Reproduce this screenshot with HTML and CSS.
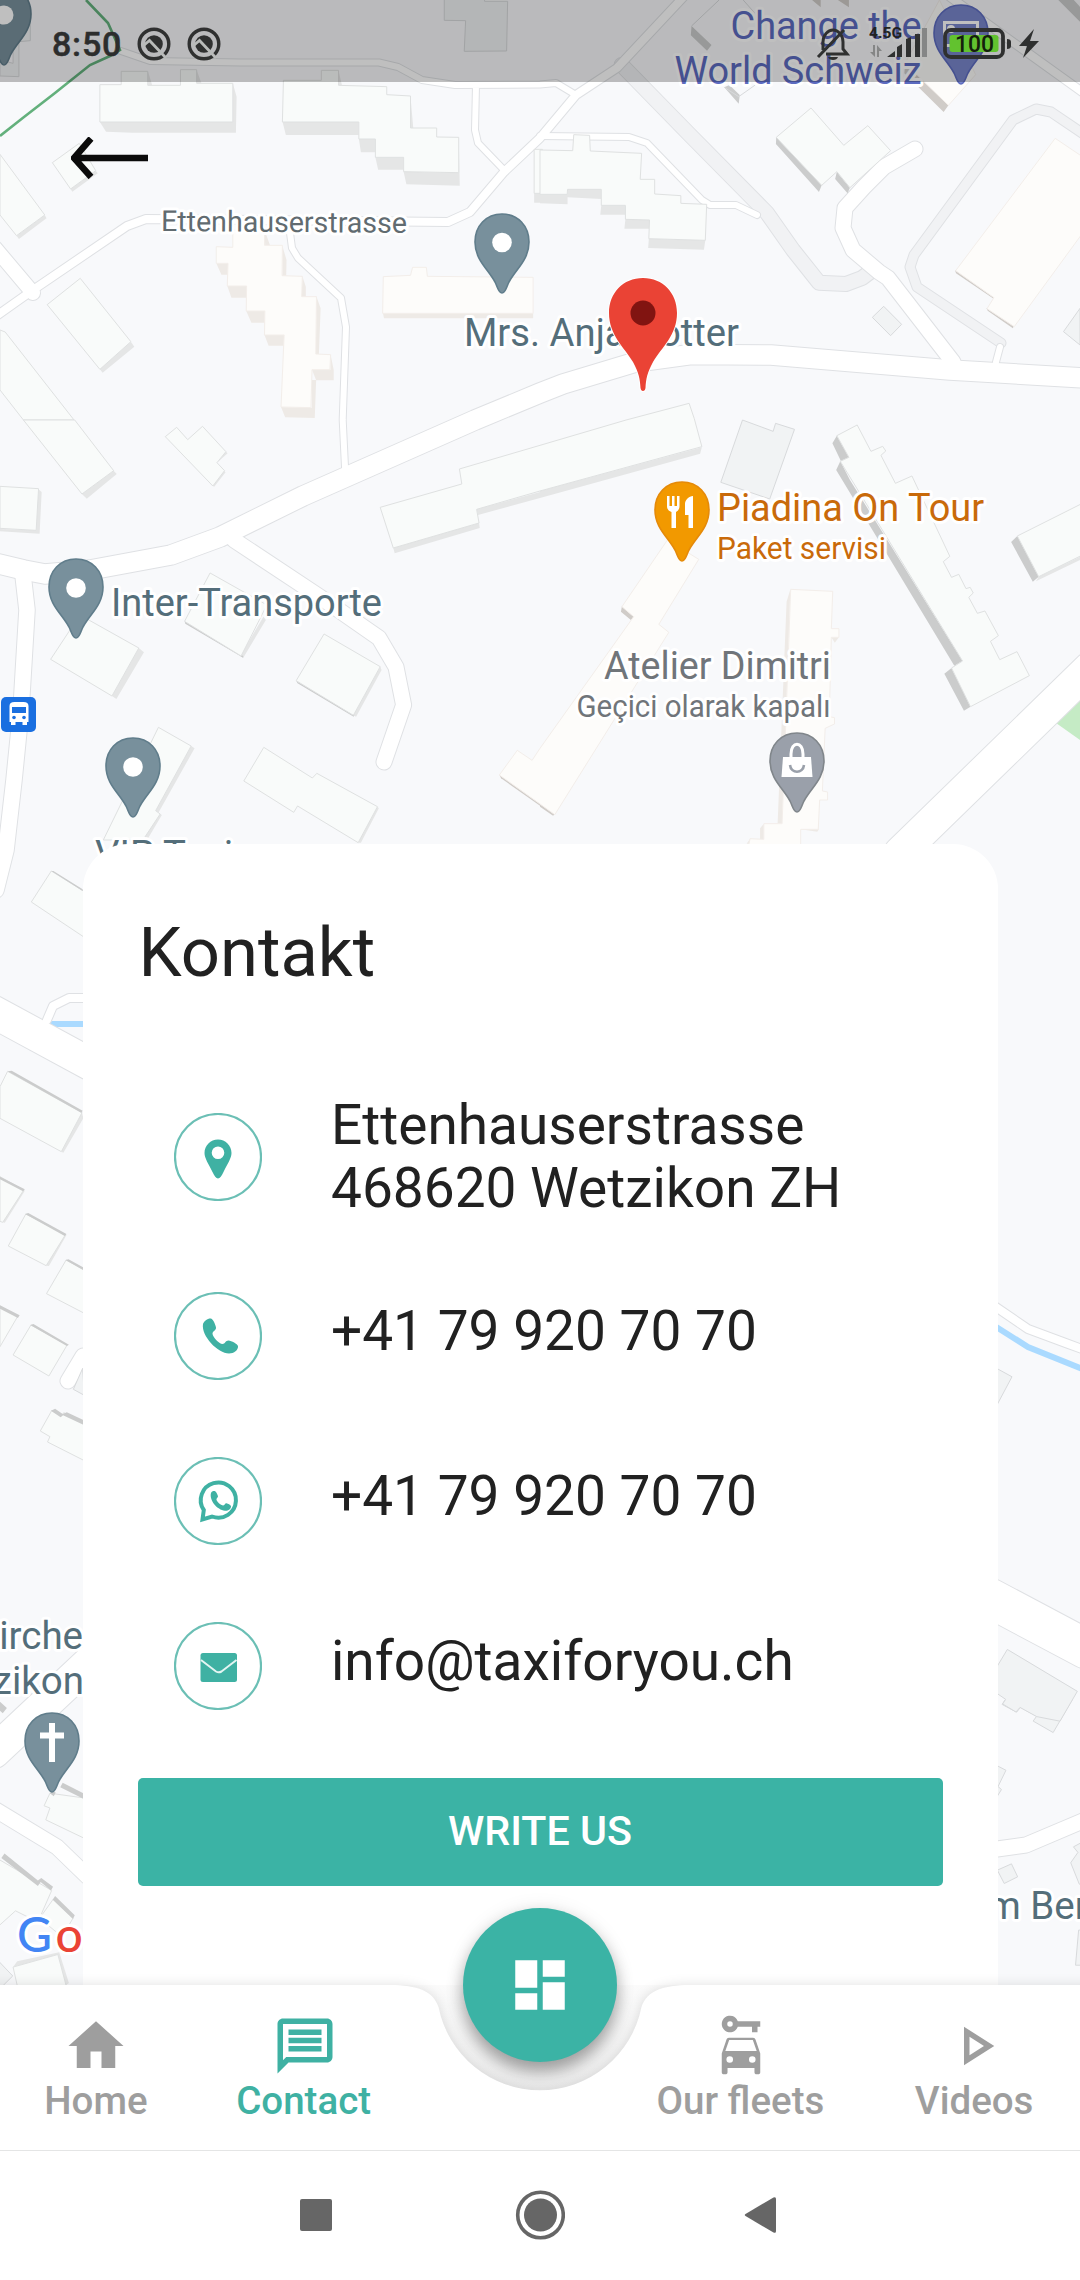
FILE: index.html
```html
<!DOCTYPE html>
<html lang="de">
<head>
<meta charset="utf-8">
<title>Kontakt</title>
<link rel="stylesheet" href="styles.css">
</head>
<body>
<div class="screen">

<svg class="map" viewBox="0 0 1080 2280" aria-label="Map">
  <defs>
    <path id="pin" d="M0-80C-16-80-27-68-27-52C-27-34-14-25-7-12C-4-6-3.500-1 0-1C3.500-1 4-6 7-12C14-25 27-34 27-52C27-68 16-80 0-80Z"/>
    <g id="streets">
      <path class="w21" d="M-5 563L24 570L45 574L90 570L171 555L220 537L303 496L475 420L540 393L563 384L636 362L691 354.500L771 355L950 370L1085 378"/>
      <path class="w8" d="M-5 317L33 290L127 226L146 219L448 222L470 212L504 172L540 138L576 95L617 68L690-10"/>
      <path class="w14" d="M-5 248L33 293"/>
      <path class="w6" d="M118 50L150 61L240 62.500L379 62.500L398 67L422 80L455 85L540 84.500L556 83L576 95M476 85L475 130L478 143L504 170M290 233L292 248L298 258L341 298L346 327L342.700 420L345 467M540 136L629 137L647 143L702 200L710 205L736 205L757 215M996 362L1000 347"/>
      <path class="w15" d="M915 149L884 167L864 187L845 208L843 228L853 250L879 272L888 278L953 362M234 540L320 597L379 638L396 667L403.600 705L384 762M-4 1810L57 1847L88 1877M83 1356L68 1381M990 1850L1026 1845L1085 1820"/>
      <path class="w16" d="M23 575L27 610L21 710L14 780L6 850L-4 890"/>
      <path class="w8" d="M950-3L1085 94M47 1020L53 1006L69 998L90 998M990 1303L1028 1329L1067 1343.500L1085 1350"/>
      <path class="w33" d="M1090 668L900 853M-6 1012L90 1064M-6 1752L90 1662"/>
      <path class="w40" d="M990 1598L1086 1649"/>
    </g>
    <g id="paths">
      <path class="w14" d="M621.600 65L688 133L767 213L793 250L819 282.700L846 284L862 278L870 272"/>
      <path class="w9" d="M1001 343L917 287L910 267L914 255L1013 120L1036 109L1051 112L1085 135"/>
    </g>
    <linearGradient id="notch" x1="0" y1="0" x2="0" y2="1">
      <stop offset="0" stop-color="#fbfbfb"/><stop offset="1" stop-color="#ececec"/>
    </linearGradient>
  </defs>

  <rect class="land" width="1080" height="2280"/>
  <path class="park" d="M1080 700L1056 723L1080 740Z"/>
  <path class="water" d="M50 1024H90M990 1323L1028 1347L1085 1370"/>
  <use href="#paths" class="casing"/><use href="#paths" class="track"/>
  <use href="#streets" class="casing"/><use href="#streets" class="street"/>

  <!-- buildings, one group per map tile -->
  <g transform="scale(.34439 .33333)">
    <path class="side" d="M290 366L308 395L385 398H685L687 290L676 250V366ZM820 364L830 405H1042V366ZM1042 417L1048 457H1090V417ZM1090 472L1098 509H1172V472ZM1172 515L1180 553L1335 557L1332 412V518ZM1192 290L1200 384H1192ZM430 215L442 256H430ZM571 210L585 250H571ZM983 212L993 256H983ZM205 567L210 575L284 520L278 512ZM48 707L55 717L135 655L130 645ZM290 1108L298 1118L390 1040L380 1025ZM1551 580V608H1568V580Z"/>
    <path class="house" d="M290 254H352V214H429V256H524V209H571V250H676V366H290ZM823 241H933V211H983V256L1123 260V284L1192 288V384H1268V411L1332 412V518L1172 515V472H1090V417H1042V366H820ZM152 488L230 430L278 512L205 567ZM0 463L130 645L48 707L0 645ZM137 914L233 835L380 1025L290 1108ZM0 990L15 996L215 1260L68 1260L0 1170ZM1551 580V448H1575V580Z"/>
    <path class="annex" d="M1290-5V61L1352 62L1348 154L1471 153L1474 4H1407V-5ZM0 180L38 190V65L88 60V122L55 125V230L0 228Z"/>
    <path class="side warm" d="M628 790L643 824H662V790ZM660 858L672 893H716V858ZM715 933L730 968H769V933ZM768 1005L780 1037H825V1005ZM816 1221L828 1252L914 1254L918 1140H906V1223ZM906 1109L918 1141H969V1110L960 1064V1109ZM919 890L931 925L926 1062H917ZM820 738L832 780L831 827H820ZM878 829L888 860V890H876ZM768 690L784 736H770ZM1112 940L1115 955H1548V940Z"/>
    <path class="house warm" d="M676 690H768V736H820L819 827L878 829L876 890H919L917 1062L960 1064L958 1109H906L903 1223L816 1221L825 1005H768L769 933H715L716 858H660L662 790H628V740L676 742ZM1113 830L1192 826L1198 802H1238L1241 829L1548 832V940H1111Z"/>
  </g>
  <g transform="translate(540 0) scale(.34439 .33333)">
    <path class="side" d="M0 583V610L80 613V583ZM80 566V592L178 597V568ZM178 616L175 644H248V616ZM248 658L245 686H318V660ZM316 716L314 744L476 749L480 721Z"/>
    <path class="side dark" d="M686 412L685 432L810 576L818 556ZM862 515L857 537L893 580L900 563ZM440 78L438 106L485 152L498 135ZM535 262L577 311L580 285L550 255Z"/>
    <path class="house" d="M0 450L95 452L98 404L144 406L146 453L295 460L291 538H333V582L409 587V610L484 613L480 721L316 716L318 660L248 658V616H178V568H80L79 583H0ZM686 412L787 324L882 436L952 377L1018 452L900 563L862 515L818 556Z"/>
    <path class="outline" d="M440 78L520 0M590 0L650 70M535 262L577 290L625 255"/>
    <path class="side dark warm" d="M1060 190L1058 220L1172 336L1186 316ZM1205 810L1208 820L1315 895L1318 888ZM1296 924L1300 932L1373 985L1377 976ZM790 0L815 22V0ZM865 0L897 22V0Z"/>
    <path class="house warm" d="M1060 190L1160 0L1265 224L1186 316ZM1496 415L1575 470V700L1377 980L1298 926L1318 893L1207 812Z"/>
    <path class="annex" d="M965 952L998 919L1050 973L1018 1007ZM1568 925L1520 995L1568 1035Z"/>
    <path class="side dark" d="M1505 0L1568 65V20L1550 0Z"/>
  </g>
  <g transform="translate(0 420) scale(.34439 .33333)">
    <path class="side" d="M238 222L252 236L339 162L330 152ZM108 205L121 216L115 341L0 334V327L105 331ZM1142 384L1146 400L1393 324L1391 309ZM1384 268L1388 285L1568 234V216ZM618 198L622 200L655 157L650 152ZM630 128L661 100L656 95ZM325 828L338 837L418 697L403 684ZM697 708L706 714L772 600L765 590ZM1026 886L1034 890L1108 750L1104 740ZM452 1172L460 1178L565 985L555 978ZM415 1250L430 1255L470 1185L460 1178ZM1040 1268L1048 1268L1100 1165L1096 1160Z"/>
    <path class="side dark" d="M536 604L538 611L706 713V708ZM860 782L864 790L1027 890L1029 884Z"/>
    <path class="house" d="M68 0H217L330 152L238 222ZM0 199L112 206L105 331L0 325ZM480 50L513 22L545 59L588 19L656 95L630 128L652 152L618 198ZM232 585L403 684L325 828L147 718ZM610 459L775 555L700 708L536 604ZM941 642L1104 740L1026 886L860 782ZM460 922L555 978L452 1172L465 1182L415 1260H300ZM766 982L907 1074L920 1060L1096 1160L1040 1268L864 1158L853 1177L708 1083Z"/>
    <path class="side dark warm" d="M1450 1065L1455 1075L1568 1157V1147Z"/>
  </g>
  <g transform="translate(540 420) scale(.34439 .33333)">
    <path class="side" d="M0 213V234L465 101L470 82ZM1448 470L1440 484L1568 420V410Z"/>
    <path class="side dark" d="M862 47L849 70L874 124L897 112ZM872 124L860 150L1203 737L1227 723L900 180ZM1195 744L1174 761L1231 872L1250 860ZM1386 348L1368 366L1431 485L1448 470Z"/>
    <path class="house" d="M0 76L250 0L433-50L448-4L470 80L0 213L-184 268L-177 309L-426 384L-464 262L-227 192L-234 147ZM862 47L921 15L961 94L995 79L1004 93L990 106L1032 190L1080 168L1190 409L1171 425L1195 472L1216 463L1237 506L1249 502L1258 519L1245 532L1270 580L1292 573L1331 647L1308 664L1335 719L1385 695L1421 767L1250 860L1195 744L1227 723L872 124L897 112ZM1386 348L1575 250V405L1448 470Z"/>
    <path class="annex" d="M588 0L677 34L684 10L739 28L667 237L525 187Z"/>
    <path class="side warm" d="M727 508L716 545L690 1210H703ZM846 652L856 668L868 652ZM650 1211L639 1225V1258H650ZM610 1256L600 1271H615ZM757 1228L805 1235L810 1228Z"/>
    <path class="side dark warm" d="M238 558L235 575L264 600L272 590ZM0 1152V1160L38 1187L43 1182Z"/>
    <path class="house warm" d="M370 360L461 418L345 613L374 637L43 1184L0 1152L-118 1065L-66 991L-23 1021L0 985L272 590L238 560ZM728 508L850 514L846 626H868V652H846L840 890L855 893V912L828 925L820 1113L835 1116V1140H812L808 1228H757V1280H605L610 1256L650 1258V1211H703Z"/>
  </g>
  <g transform="translate(0 840) scale(.34439 .33333)">
    <path class="side" d="M178 935L184 938L242 835L238 818ZM8 1147L14 1148L72 1052L66 1048ZM134 1277L142 1278L193 1185L185 1180Z"/>
    <path class="house" d="M149 93L245 155V292L91 186ZM22 694L238 818L178 935L0 835V740ZM0 1010L69 1050L8 1147L0 1144ZM75 1122L190 1184L134 1277L24 1218ZM192 1260L245 1290V1420L135 1361ZM0 1398L52 1428L0 1520ZM90 1455L195 1515L142 1608L38 1545Z"/>
    <path class="side dark" d="M149 93L155 93L240 148V153ZM22 694L34 692L240 812L236 818ZM0 1010V1018L67 1054L72 1048ZM73 1122L82 1119L193 1182L188 1188ZM190 1260L199 1258L245 1284V1292ZM0 1396V1406L52 1434L57 1426ZM88 1455L97 1452L200 1514L194 1518Z"/>
  </g>
  <g transform="translate(0 1340) scale(.34439 .33333)">
    <path class="annex" d="M240 85L213 148L245 166Z"/>
    <path class="house" d="M150 212L178 228L185 218L245 250V362L138 306L145 290L117 273Z"/>
    <path class="side dark" d="M148 212L160 206L182 222L194 217L242 240V254L183 226L176 232ZM0 1085L20 1104L8 1120L0 1112Z"/>
  </g>
  <g transform="translate(0 1700) scale(.34439 .3699)">
    <path class="side" d="M38 722L50 706L172 682L200 765L190 772L168 688Z"/>
    <path class="house" d="M145 252L245 265V374L133 324L145 292L128 286ZM-5 430L150 515L110 600L45 570L-5 612ZM155 538L212 590L180 640L115 590ZM38 722L168 688L192 772H50Z"/>
    <path class="annex" d="M-5 705L37 746L-5 785Z"/>
    <path class="side dark" d="M175 236L182 224L242 252V267ZM145 252L150 246L162 250L156 260ZM4 427L13 415L110 488L120 481L154 505L148 515L118 492L110 503ZM153 540L160 530L217 582L212 592Z"/>
  </g>
  <g transform="translate(540 1700) scale(.34439 .3699)">
    <path class="annex" d="M1342 12L1350 0H1545L1490 88L1432 57L1442 44L1395 20L1384 33ZM1328 178L1353 190L1330 234L1340 242L1328 260ZM1328 460L1369 443L1387 478L1348 496ZM1575 384L1549 397L1562 412L1541 440L1566 498H1575ZM1575 622H1564L1555 717H1575Z"/>
  </g>
  <g transform="translate(800 820) scale(.33333 .574)">
    <path class="annex" d="M592 956L636 970L592 1018ZM592 1474L622 1445L832 1518L780 1570L710 1562L660 1546L648 1554L608 1540L617 1532L592 1522Z"/>
  </g>

  <path class="trail" d="M86 0L108 23L120 50L110 56L90 65L55 93L24 117L0 136"/>

  <g class="poi">
    <use href="#pin" class="slate" x="4" y="66"/><circle class="hole" cx="4" cy="15" r="9.500"/>
    <use href="#pin" class="slate" x="502" y="294"/><circle class="hole" cx="502" cy="242.500" r="9.800"/>
    <use href="#pin" class="slate" x="76" y="639"/><circle class="hole" cx="76" cy="588" r="9.800"/>
    <use href="#pin" class="slate" x="133" y="818"/><circle class="hole" cx="133" cy="767" r="9.800"/>
    <use href="#pin" class="slate" x="52" y="1793"/><path class="hole" d="M49 1723h6v9.500h9v6h-9v23.500h-6v-23.500h-9v-6h9z"/>
    <use href="#pin" class="indigo" x="961" y="85"/>
    <path class="hole" fill-rule="evenodd" d="M943 21h36v26h-36zM946 24v20h30v-20z"/><circle class="hole" cx="951" cy="29" r="4"/>
    <use href="#pin" class="food" x="682" y="562"/>
    <path class="hole" d="M667 496h2.500v10h2.500v-10h2.500v10h2.500v-10h2.500v10c0 3-1.500 5-3.500 6v16h-4.500v-16c-3-1-4.500-3-4.500-6zM693 496v32h-4.500v-13h-3.500v-11c0-4 4-8 8-8z"/>
    <use href="#pin" class="shop" x="797" y="813"/>
    <path class="hole" d="M783 757h28l1.500 20h-31z"/><path class="bag" d="M791 757v-3c0-13 12-13 12 0v3"/><path class="smile" d="M790 765c1 9 13 9 14 0"/>
  </g>

  <g class="bus"><rect x="1" y="697" width="35" height="35" rx="5"/><path class="hole" d="M9.500 706q0-4 5-4h9q5 0 5 4v16h-1.500v3h-4.500v-3h-7v3h-4.500v-3h-1.500z"/><path d="M12 707h14v6h-14z"/><circle cx="14" cy="717.500" r="1.800"/><circle cx="24" cy="717.500" r="1.800"/></g>

  <g class="labels">
    <text class="road" x="161" y="231" textLength="246" lengthAdjust="spacingAndGlyphs" transform="rotate(.45 161 231)">Ettenhauserstrasse</text>
    <text x="464" y="345.500" textLength="275" lengthAdjust="spacingAndGlyphs">Mrs. Anja Potter</text>
    <text x="111" y="615.500" textLength="271" lengthAdjust="spacingAndGlyphs">Inter-Transporte</text>
    <text x="95" y="868" textLength="138" lengthAdjust="spacingAndGlyphs">VIP Taxi</text>
    <text class="l-food" x="717" y="520.500" textLength="267" lengthAdjust="spacingAndGlyphs">Piadina On Tour</text>
    <text class="l-food sub" x="717" y="558.500" textLength="169" lengthAdjust="spacingAndGlyphs">Paket servisi</text>
    <text class="l-shop" x="604" y="678.500" textLength="227" lengthAdjust="spacingAndGlyphs">Atelier Dimitri</text>
    <text class="l-shop sub" x="576.500" y="716.500" textLength="254" lengthAdjust="spacingAndGlyphs">Geçici olarak kapalı</text>
    <text class="l-work" x="730.500" y="39" textLength="191" lengthAdjust="spacingAndGlyphs">Change the</text>
    <text class="l-work" x="674.500" y="83.500" textLength="247" lengthAdjust="spacingAndGlyphs">World Schweiz</text>
    <text x="83" y="1649" text-anchor="end">Kirche</text>
    <text x="84" y="1694" text-anchor="end">Wetzikon</text>
    <text x="987" y="1919">m Ber</text>
    <text class="logo" y="1951.500"><tspan class="g-blue" x="17">G</tspan><tspan class="g-red" x="55.500">o</tspan></text>
  </g>

  <g class="marker">
    <path d="M643 278C623 278 609 293 609 313C609 335 624 347 633 362C639 373 640 379 640.500 388Q641 391 643 391Q645 391 645.500 388C646 379 647 373 653 362C662 347 677 335 677 313C677 293 663 278 643 278Z"/>
    <circle cx="643" cy="313" r="12.500"/>
  </g>
</svg>

<header class="status">
  <span class="clock">8:50</span>
  <svg class="app-dot" viewBox="0 0 34 36"><circle class="ring" cx="17" cy="18" r="14.800"/><circle cx="17" cy="18" r="8.800"/><path class="cut" d="M6 20L12.500 14.500L29 32"/></svg>
  <svg class="app-dot" viewBox="0 0 34 36"><circle class="ring" cx="17" cy="18" r="14.800"/><circle cx="17" cy="18" r="8.800"/><path class="cut" d="M6 20L12.500 14.500L29 32"/></svg>
  <svg class="bell" viewBox="0 0 34 34"><path class="ring bold" d="M7 23V15C7 8 12 3 17 3S27 8 27 15V22L31 27H10M2 30L28 3"/><path d="M12 30h10q-1 3-5 3t-5-3z"/></svg>
  <svg class="signal" viewBox="0 0 60 34"><text x="0" y="11" textLength="33" lengthAdjust="spacingAndGlyphs">4.5G</text><path d="M18 30l8-6v6zM28 20l5-3v13h-5zM37 12l5-2v20h-5zM46 7h5v23h-5z"/><path class="faint" d="M53 1h5v29h-5zM4 18h2v12L1 25h3zM8 30V18l5 6h-3v6z"/></svg>
  <svg class="battery" viewBox="0 0 70 32"><rect class="case" x="2" y="2" width="58" height="27" rx="6"/><rect class="charge" x="6.500" y="7" width="49" height="17" rx="3"/><path d="M64 11q4 0 4 3v4q0 3-4 3z"/><text x="12" y="24" textLength="39" lengthAdjust="spacingAndGlyphs">100</text></svg>
  <svg class="bolt" viewBox="0 0 20 30"><path d="M15 0L0 17h8L4 29L20 12h-9z"/></svg>
</header>

<main class="stage">
  <svg class="back" viewBox="0 0 77 42"><path d="M77 21H3M20 1.500L3 21L20 40"/></svg>

  <section class="card">
    <h1>Kontakt</h1>
    <ul class="contacts">
      <li class="tall">
        <svg class="badge" viewBox="0 0 88 88"><circle class="rim" cx="44" cy="44" r="43"/><path fill-rule="evenodd" d="M44 26.500c-7.500 0-13.500 6-13.500 13.500 0 5 4 11 8 19 2 4 3.500 6.500 5.500 6.500s3.500-2.500 5.500-6.500c4-8 8-14 8-19 0-7.500-6-13.500-13.500-13.500zm0 7a6.300 6.300 0 1 1 0 12.600 6.300 6.300 0 0 1 0-12.600z"/></svg>
        <span>Ettenhauserstrasse<br>468620 Wetzikon ZH</span>
      </li>
      <li>
        <svg class="badge" viewBox="0 0 88 88"><circle class="rim" cx="44" cy="44" r="43"/><path d="M29 32c1-3 5-6 8-5.500 2 .5 4.500 6 5 9 .4 3-3.500 3.500-3.500 6 0 3.500 6.500 10.500 10 10.500 2.500 0 3-3.500 6-3.500 3 .2 9 3.500 9.500 5.500.5 4-4 7.500-9 7.500C44 61.500 27 44 29 32z"/></svg>
        <span>+41 79 920 70 70</span>
      </li>
      <li>
        <svg class="badge" viewBox="0 0 88 88"><circle class="rim" cx="44" cy="44" r="43"/><path class="bubble" d="M28.500 62.500l1.300-9.500A17.600 17.600 0 1 1 38 59.500z"/><path d="M37 36c1-2 3-2.500 4.500-1.500 1 1 2.500 4 2.500 5s-2 2-1.500 3.500c1 2.500 4 5 6.500 5.500 1.500 0 2-2.500 3.500-2.300 1.500.3 4 1.600 4.500 2.800.3 3-3 5-6 4.700C43 53 35 43 37 36z"/></svg>
        <span>+41 79 920 70 70</span>
      </li>
      <li>
        <svg class="badge" viewBox="0 0 88 88"><circle class="rim" cx="44" cy="44" r="43"/><rect x="26.500" y="31" width="36.500" height="29" rx="2.500"/><path class="flap" d="M27 38L42 49.500Q44.700 51 47.500 49.500L62.500 38"/></svg>
        <span>info@taxiforyou.ch</span>
      </li>
    </ul>
    <button class="write">WRITE US</button>
  </section>
</main>

<nav class="tabs">
  <svg class="tabs-bg" viewBox="0 0 1080 166"><rect class="under" x="380" width="320" height="110"/><path class="sheet" d="M-20 0H389C418 0 433 6 438.500 22A103.500 103.500 0 0 0 641.500 22C647 6 662 0 691 0H1100V166H-20Z"/></svg>
  <a class="tab home"><svg viewBox="0 0 24 24"><path d="M10 20v-6h4v6h5v-8h3L12 3 2 12h3v8z"/></svg>Home</a>
  <a class="tab contact active"><svg viewBox="0 0 24 24"><path d="M20 2H4c-1.100 0-2 .9-2 2v18l4-4h14c1.100 0 2-.9 2-2V4c0-1.100-.9-2-2-2zm0 14H5.170L4 17.170V4h16v12zM6 12h12v2H6v-2zm0-3h12v2H6V9zm0-3h12v2H6V6z"/></svg>Contact</a>
  <a class="tab fleets"><svg viewBox="0 0 24 24"><path fill-rule="evenodd" d="M10.830 3a3 3 0 1 0 0 2H16v2h2V5h1V3zM8 5a1 1 0 1 1 0-2 1 1 0 0 1 0 2zM16.400 9H7.600c-.4 0-.8.300-.9.700L5 14.700v6.800c0 .5.300.8.800.8h.500c.5 0 .8-.3.800-.8V20h9.800v1.500c0 .5.300.8.800.8h.500c.5 0 .8-.3.800-.8v-6.800l-1.700-5c-.1-.4-.5-.7-.9-.7zM7.700 9.800h8.600l1.400 4H6.300zM7.900 15.700a1.200 1.200 0 1 1 0 2.400 1.200 1.200 0 0 1 0-2.400zM16.100 15.700a1.200 1.200 0 1 1 0 2.400 1.200 1.200 0 0 1 0-2.400z"/></svg>Our fleets</a>
  <a class="tab videos"><svg viewBox="0 0 24 24"><path fill-rule="evenodd" d="M8 5v14l11-7zm2 3.640L15.270 12 10 15.360z"/></svg>Videos</a>
  <button class="fab"><svg viewBox="0 0 24 24"><path d="M3 13h8V3H3v10zm0 8h8v-6H3v6zm10 0h8V11h-8v10zm0-18v6h8V3h-8z"/></svg></button>
</nav>

<footer class="system">
  <svg viewBox="0 0 50 50"><rect x="8" y="9" width="32" height="32" rx="2"/></svg>
  <svg viewBox="0 0 50 50"><circle class="outer" cx="25.500" cy="25" r="22.800"/><circle cx="25.500" cy="25" r="16.500"/></svg>
  <svg viewBox="0 0 50 50"><path d="M7.500 24L35.500 7.500Q38 6.300 38 9V41Q38 43.700 35.500 42.500L7.500 26Q6 25 7.500 24z"/></svg>
</footer>

</div>
</body>
</html>
```
FILE: styles.css
```css
* { box-sizing: border-box; }
body { margin: 0; font-family: Roboto, "Noto Sans", sans-serif; }
svg { display: block; flex: none; }
button { border: 0; padding: 0; font-family: inherit; }

.screen {
  position: relative;
  display: flex;
  flex-direction: column;
  width: 1080px;
  height: 2280px;
  overflow: hidden;
  background: #fff;
}

/* map canvas */
.map { position: absolute; inset: 0; width: 1080px; height: 2280px; }
.land { fill: #f8f9fb; }
.park { fill: #c5ebc5; }
.water { fill: none; stroke: #aadaff; stroke-width: 6; }
.trail { fill: none; stroke: #63b07c; stroke-width: 2.6; }
.casing { fill: none; stroke: #dfe1e4; --edge: 2px; stroke-linejoin: round; stroke-linecap: round; }
.street { fill: none; stroke: #fff; --edge: 0px; stroke-linejoin: round; stroke-linecap: round; }
.track { fill: none; stroke: #f1f2f4; --edge: 0px; stroke-linejoin: round; stroke-linecap: round; }
.w6 { stroke-width: calc(6px + var(--edge)); }
.w8 { stroke-width: calc(8px + var(--edge)); }
.w9 { stroke-width: calc(9px + var(--edge)); }
.w14 { stroke-width: calc(14px + var(--edge)); }
.w15 { stroke-width: calc(15px + var(--edge)); }
.w16 { stroke-width: calc(15.5px + var(--edge)); }
.w21 { stroke-width: calc(19.5px + var(--edge)); }
.w33 { stroke-width: calc(32px + var(--edge)); }
.w40 { stroke-width: calc(39px + var(--edge)); }
.house, .annex, .outline { vector-effect: non-scaling-stroke; stroke-width: 1px; }
.house { fill: #f9fbfa; stroke: #dfe1e1; }
.house.warm { fill: #fdfcfa; stroke: #f3eeea; }
.annex { fill: #f1f3f4; stroke: #d8dadc; }
.outline { fill: none; stroke: #d8dadc; }
.side { fill: #e5e6e6; }
.side.warm { fill: #eeeae6; }
.side.dark { fill: #cbcccc; }
.side.dark.warm { fill: #d0ccc8; }

.poi use { stroke-width: 1.6; }
.slate { fill: #78909c; stroke: #607d8b; }
.indigo { fill: #7986cb; stroke: #5c6bc0; }
.food { fill: #f29900; stroke: #e58a09; }
.shop { fill: #9aa0aa; stroke: #80868b; }
.hole { fill: #fff; }
.poi .bag { fill: none; stroke: #fff; stroke-width: 3; }
.smile { fill: none; stroke: #9aa0aa; stroke-width: 2.6; }
.bus { fill: #1a6fe0; }
.bus .hole { fill: #fff; }
.marker path { fill: #ea4335; stroke: #fff; stroke-width: 2; paint-order: stroke; }
.marker circle { fill: #811411; }

.labels text {
  font-size: 38.5px;
  fill: #546e7a;
  stroke: #fff;
  stroke-width: 6px;
  stroke-linejoin: round;
  paint-order: stroke;
}
.labels .road { font-size: 29px; fill: #616b70; }
.labels .sub { font-size: 31px; }
.labels .l-food { fill: #c96a0a; }
.labels .l-shop { fill: #70757a; }
.labels .l-work { fill: #5c6bc0; }
.labels .logo { font-family: Lato, sans-serif; font-size: 48px; font-weight: 500; }
.g-blue { fill: #4285f4; }
.g-red { fill: #ea4335; }

/* status bar */
.status {
  position: relative;
  display: flex;
  align-items: center;
  flex: none;
  height: 82px;
  padding: 6px 41px 0 52px;
  background: rgba(0, 0, 0, .25);
  fill: #2f3030;
}
.clock { width: 86px; font-size: 34px; font-weight: 500; color: #2c2d2d; letter-spacing: .8px; -webkit-text-stroke: .5px #2c2d2d; }
.app-dot { width: 34px; height: 36px; margin-right: 16px; }
.ring { fill: none; stroke: #2f3030; stroke-width: 3.4; }
.cut { fill: none; stroke: #b9bbba; stroke-width: 2.8; }
.ring.bold { stroke-width: 3; }
.bell { width: 34px; height: 34px; margin-left: 579px; }
.signal { width: 60px; height: 34px; margin-left: 19px; }
.signal text { font-size: 14px; font-weight: 700; fill: #222; }
.faint { fill: #858686; }
.battery { width: 70px; height: 32px; margin-left: 14px; }
.battery text { font-size: 23px; font-weight: 500; fill: #14200c; }
.case { fill: none; stroke: #2f3030; stroke-width: 3.8; }
.charge { fill: #62c22f; }
.bolt { width: 20px; height: 30px; margin-left: 6px; }

/* page content */
.stage { position: relative; display: flex; flex-direction: column; flex: none; height: 1903px; }
.back { width: 77px; height: 42px; margin: 55px 0 0 71px; fill: none; stroke: #0b0b0b; stroke-width: 6.5; }
.card {
  display: flex;
  flex-direction: column;
  width: 915px;
  height: 1141px;
  margin: auto 0 0 82.5px;
  padding: 68.5px 55px 0;
  border-radius: 45px 45px 0 0;
  background: #fff;
  color: #212121;
}
h1 { margin: 0; padding-left: 1px; font-size: 68.75px; font-weight: 400; line-height: 80px; }
.contacts { margin: 100.5px 0 0; padding: 0 0 0 36.5px; list-style: none; font-size: 55px; line-height: 63px; }
.contacts li { display: flex; align-items: center; gap: 69px; height: 88px; margin-top: 77px; }
.contacts li.tall { height: 128px; margin-top: 0; }
.contacts li.tall + li { margin-top: 71px; }
.contacts span { padding-bottom: 10px; white-space: nowrap; }
.contacts .tall span { padding-bottom: 0; }
.badge { width: 88px; height: 88px; fill: #3fb1a3; }
.rim { fill: none; stroke: #6bbfb5; stroke-width: 2.2; }
.bubble { fill: none; stroke: #3fb1a3; stroke-width: 4; }
.flap { fill: none; stroke: #e4f5f2; stroke-width: 2; }
.write {
  height: 108px;
  margin-top: 68px;
  padding-bottom: 2px;
  border-radius: 5px;
  background: #3bb3a5;
  color: #fff;
  font-size: 41.25px;
  font-weight: 500;
}

/* bottom tabs */
.tabs { position: relative; display: flex; flex: none; height: 165px; }
.tabs-bg { position: absolute; left: 0; top: 0; width: 1080px; height: 166px; overflow: visible; }
.under { fill: url(#notch); }
.sheet { fill: #fff; filter: drop-shadow(0 0 6px rgba(0, 0, 0, .12)); }
.tab {
  position: relative;
  display: flex;
  flex-direction: column;
  align-items: center;
  padding-top: 28px;
  color: #9e9e9e;
  fill: #9e9e9e;
  font-size: 38.5px;
  font-weight: 500;
  line-height: 44px;
  white-space: nowrap;
}
.tab svg { width: 66px; height: 66px; margin-left: 2px; }
.tab.active { color: #3fb1a3; fill: #3fb1a3; }
.home { width: 192px; }
.home svg { margin-left: 0; }
.contact { width: 224px; }
.fleets { width: 212px; margin-left: 219px; }
.videos { width: 212px; margin-left: 22px; }
.fab {
  position: absolute;
  left: 463px;
  top: -77px;
  display: flex;
  align-items: center;
  justify-content: center;
  width: 154px;
  height: 154px;
  border-radius: 50%;
  background: #3bb3a5;
  box-shadow: 0 10px 16px rgba(0, 0, 0, .3), 0 2px 20px rgba(0, 0, 0, .1);
}
.fab svg { width: 66px; height: 66px; fill: #fff; }

/* system navigation */
.system {
  position: relative;
  display: flex;
  justify-content: center;
  gap: 173px;
  flex: none;
  height: 130px;
  padding-top: 39px;
  border-top: 1px solid #e4e5e5;
  background: #fff;
  fill: #666;
}
.system svg { width: 50px; height: 50px; }
.outer { fill: none; stroke: #666; stroke-width: 3.6; }
```
